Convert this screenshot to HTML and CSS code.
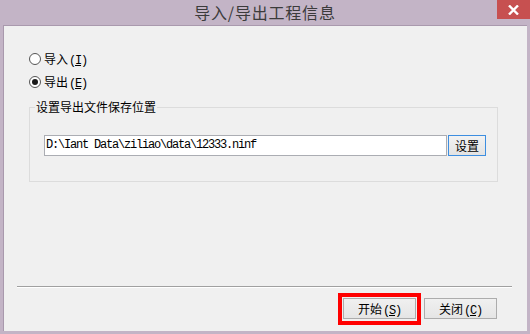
FILE: index.html
```html
<!DOCTYPE html>
<html lang="zh-CN">
<head>
<meta charset="utf-8">
<title>导入/导出工程信息</title>
<link rel="stylesheet" href="styles.css">
</head>
<body>
<div class="window">
  <div class="titlebar">
    <span class="spacer"></span>
    <span class="title">导入/导出工程信息</span>
    <span class="close-x">
      <svg width="11" height="10" viewBox="0 0 11 10"><path d="M1 0.5 L10 9.5 M10 0.5 L1 9.5" stroke="#fff" stroke-width="2.4" fill="none"/></svg>
    </span>
  </div>
  <div class="client">
    <div class="radios">
      <div class="radio"><span class="circle"></span><span>导入<span class="m">(<u>I</u>)</span></span></div>
      <div class="radio"><span class="circle checked"></span><span>导出<span class="m">(<u>E</u>)</span></span></div>
    </div>
    <fieldset class="group">
      <legend>设置导出文件保存位置</legend>
      <div class="pathrow">
        <div class="path">D:\Iant Data\ziliao\data\12333.ninf</div>
        <button class="set">设置</button>
      </div>
    </fieldset>
    <div class="footer">
      <div class="sep"></div>
      <div class="actions">
        <span class="highlight"><button class="btn">开始<span class="m">(<u>S</u>)</span></button></span>
        <button class="btn close-btn">关闭<span class="m">(<u>C</u>)</span></button>
      </div>
    </div>
  </div>
</div>
</body>
</html>
```
FILE: styles.css
```css
* { box-sizing: border-box; }
html, body { margin: 0; padding: 0; }
body { background: #c3b4c6; font-family: "Noto Sans CJK SC", "Liberation Sans", sans-serif; }

.window {
  width: 530px;
  height: 334px;
  background: #c3b4c6;
  display: flex;
  flex-direction: column;
}

.titlebar {
  height: 25px;
  display: grid;
  grid-template-columns: 1fr auto 1fr;
}
.title {
  font-size: 16px;
  line-height: 25px;
  letter-spacing: 0.8px;
  color: #3b3b3b;
}
.close-x {
  justify-self: end;
  width: 33px;
  height: 19px;
  background: #c75050;
  display: flex;
  align-items: center;
  justify-content: center;
}

.client {
  flex: 1;
  margin: 0 3px 3px 3px;
  background: #f0f0f0;
  border-top: 1px solid #a999ad;
  border-left: 1px solid #a999ad;
  display: flex;
  flex-direction: column;
  font-size: 12px;
  color: #000;
}

.m {
  font-family: "Liberation Mono", monospace;
  font-size: 12px;
  letter-spacing: -1.2px;
  margin-left: 1px;
}

.radios {
  margin: 21px 0 0 25px;
  display: flex;
  flex-direction: column;
}
.radio {
  height: 23px;
  display: flex;
  align-items: center;
  gap: 3px;
  font-size: 12px;
}
.circle {
  width: 12px;
  height: 12px;
  border-radius: 50%;
  border: 1px solid #555;
  background: #fff;
  display: flex;
  align-items: center;
  justify-content: center;
}
.circle.checked::after {
  content: "";
  width: 6px;
  height: 6px;
  border-radius: 50%;
  background: #1a1a1a;
}
u { text-decoration: underline; text-underline-offset: 1px; }

.group {
  margin: 6px 29px 0 25px;
  padding: 20px 0 25px 5px;
  border: 1px solid #dcdcdc;
  min-width: 0;
}
.group legend {
  padding: 0 1px;
  font-size: 12px;
  line-height: 16px;
}
.pathrow {
  margin-left: 9px;
  display: flex;
  gap: 1px;
}
.path {
  width: 403px;
  height: 21px;
  border: 1px solid #abadb3;
  background: #fff;
  padding: 0 1px;
  font-family: "Liberation Mono", monospace;
  font-size: 12px;
  letter-spacing: -1.2px;
  line-height: 19px;
  white-space: nowrap;
}
.set {
  width: 38px;
  height: 21px;
  padding: 0;
  border: 1px solid #3d8ee0;
  background: linear-gradient(#f2f2f2, #e3e3e3);
  font-family: inherit;
  font-size: 12px;
  color: #000;
}

.footer {
  margin-top: auto;
  padding-bottom: 6px;
}
.sep {
  margin: 0 15px 0 13px;
  height: 2px;
  border-top: 1px solid #a0a0a0;
  border-bottom: 1px solid #fff;
}
.actions {
  margin-top: 5px;
  padding-right: 30px;
  display: flex;
  justify-content: flex-end;
  align-items: flex-start;
  gap: 3px;
}
.highlight {
  display: flex;
  border: 4px solid #ff0000;
  padding: 1px 1px 2px 1px;
}
.btn {
  width: 73px;
  height: 21px;
  padding: 0;
  border: 1px solid #acacac;
  background: linear-gradient(#f0f0f0, #e5e5e5);
  font-family: inherit;
  font-size: 12px;
  color: #000;
}
.close-btn { margin-top: 5px; }
```
